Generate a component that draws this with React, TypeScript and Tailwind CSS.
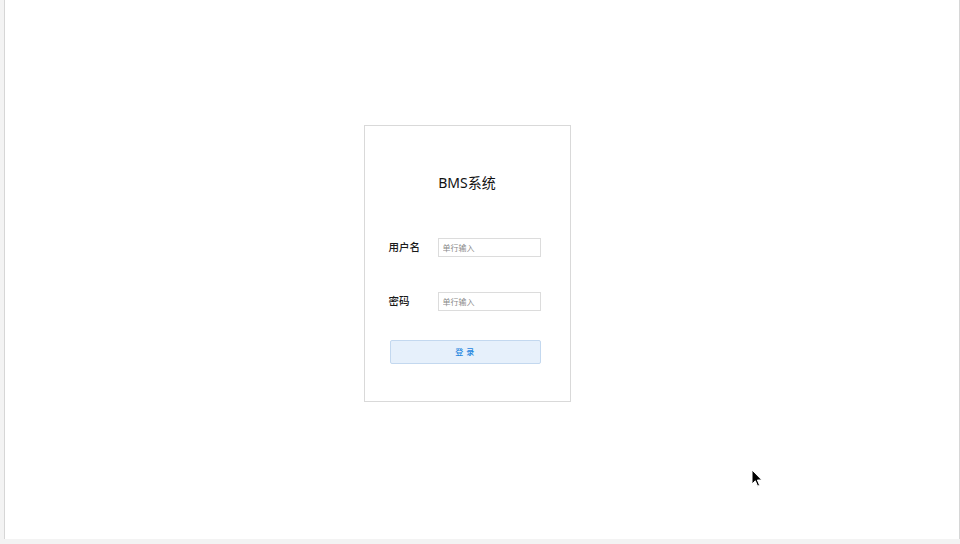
export default function App() {
  return (
    <div
      className="relative flex h-[544px] w-[960px] flex-col bg-[#f3f3f3]"
      style={{ fontFamily: '"Noto Sans", "Noto Sans CJK SC", sans-serif' }}
    >
      <div className="ml-[4px] flex h-[539px] w-[956px] items-start justify-center border-l border-r border-[#d6d6d6] bg-white">
        {/* Login card */}
        <div className="ml-[-30px] mt-[125px] flex h-[277px] w-[207px] flex-col border border-[#d9d9d9] bg-white">
          <div className="mt-[47px] text-center text-[14px] leading-[20px] text-[#111]">BMS系统</div>

          <div className="mt-[45px] flex items-center pl-[24px]">
            <span className="w-[49px] text-[10.5px] font-medium text-[#1a1a1a]">用户名</span>
            <input
              placeholder="单行输入"
              className="h-[19px] w-[103px] border border-[#dcdcdc] px-[4px] text-[8px] outline-none placeholder:text-[#8a8a8a]"
            />
          </div>

          <div className="mt-[35px] flex items-center pl-[24px]">
            <span className="w-[49px] text-[10.5px] font-medium text-[#1a1a1a]">密码</span>
            <input
              placeholder="单行输入"
              className="h-[19px] w-[103px] border border-[#dcdcdc] px-[4px] text-[8px] outline-none placeholder:text-[#8a8a8a]"
            />
          </div>

          <button className="ml-[25px] mt-[29px] h-[24px] w-[151px] rounded-[2px] border border-[#c3d8ef] bg-[#e6f0fb] text-[8px] font-medium tracking-[0.5px] text-[#1f86e0]">
            登 录
          </button>
        </div>
      </div>

      {/* mouse cursor */}
      <svg className="absolute left-[751px] top-[469px]" width="12" height="19" viewBox="0 0 12 19">
        <path d="M1 1 L1 15 L4.3 11.8 L6.6 17.2 L8.6 16.3 L6.4 11 L10.8 11 Z" fill="#000" stroke="#fff" strokeWidth="1" />
      </svg>
    </div>
  )
}
